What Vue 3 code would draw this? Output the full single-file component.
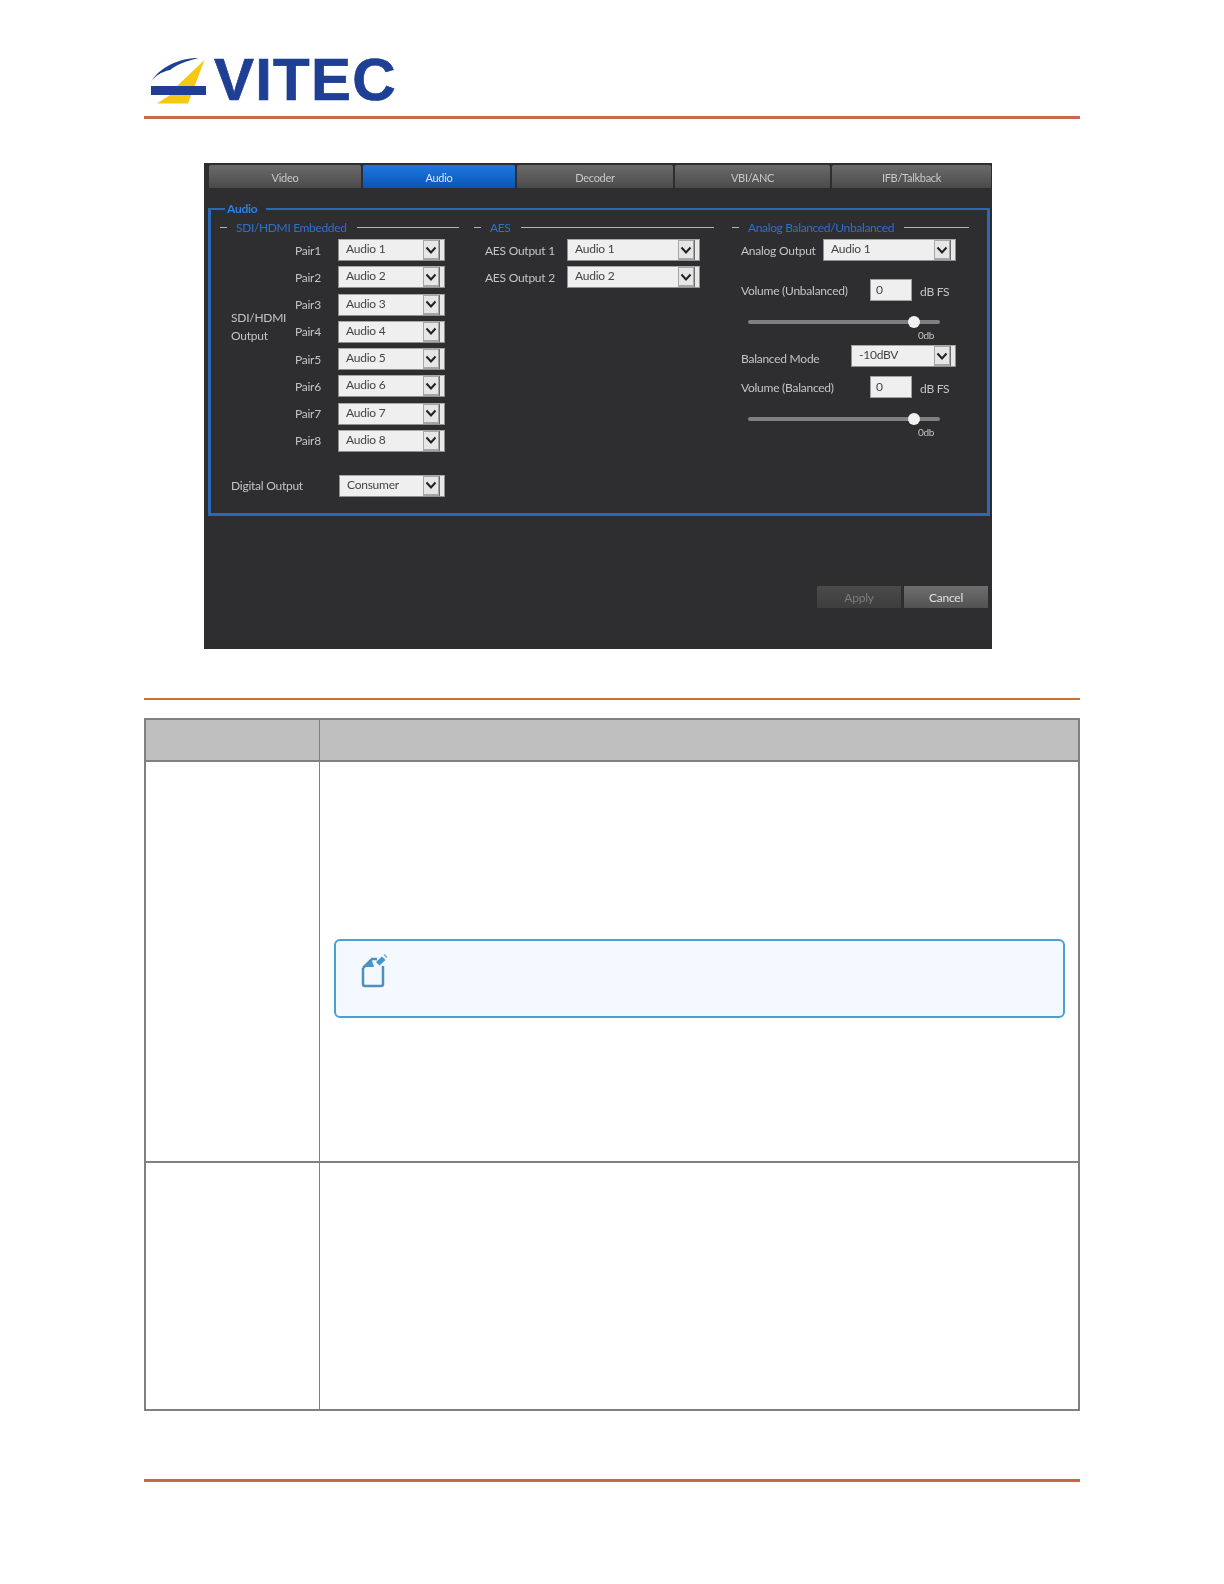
<script setup>
const tabs = ['Video', 'Audio', 'Decoder', 'VBI/ANC', 'IFB/Talkback']
const pairs = [1, 2, 3, 4, 5, 6, 7, 8]
</script>

<template>
  <div class="page">
    <header class="header">
      <div class="logo">
        <svg class="mark" width="58" height="48" viewBox="150 57 58 48">
          <path d="M204.500 60 L177 86 L206 86 L206 95 L170 95 L157 103.500 L188 103.500 Z" fill="#f6c812" />
          <path d="M151 82 C159 68 178 58 198.500 58 C186 61 176 65 170 70 C161 72 155 76 151 82 Z" fill="#1f3f94" />
          <rect x="151" y="86" width="55" height="9" fill="#1f3f94" />
        </svg>
        <span class="wordmark">VITEC</span>
      </div>
    </header>

    <section class="panel">
      <nav class="tabs">
        <div v-for="t in tabs" :key="t" class="tab" :class="{ active: t === 'Audio' }">{{ t }}</div>
      </nav>

      <fieldset class="audio">
        <legend>Audio</legend>
        <div class="cols">
          <div class="col col-a">
            <div class="sec"><i class="dash"></i><span>SDI/HDMI Embedded</span><i class="line"></i></div>
            <div class="embedded">
              <div class="side">SDI/HDMI<br />Output</div>
              <div class="pairs">
                <div v-for="p in pairs" :key="p" class="pair">
                  <span class="lbl">Pair{{ p }}</span>
                  <div class="sel">
                    <span class="val">Audio {{ p }}</span>
                    <span class="btn"><svg width="14" height="14" viewBox="0 0 14 14"><path d="M2.500 4.500 L7 9.500 L11.500 4.500" fill="none" stroke="#222" stroke-width="2" /></svg></span>
                    <span class="strip"></span>
                  </div>
                </div>
              </div>
            </div>
            <div class="digital">
              <span class="lbl">Digital Output</span>
              <div class="sel">
                <span class="val">Consumer</span>
                <span class="btn"><svg width="14" height="14" viewBox="0 0 14 14"><path d="M2.500 4.500 L7 9.500 L11.500 4.500" fill="none" stroke="#222" stroke-width="2" /></svg></span>
                <span class="strip"></span>
              </div>
            </div>
          </div>

          <div class="col col-b">
            <div class="sec"><i class="dash"></i><span>AES</span><i class="line"></i></div>
            <div class="aes">
              <div v-for="n in 2" :key="n" class="aes-row">
                <span class="lbl">AES Output {{ n }}</span>
                <div class="sel">
                  <span class="val">Audio {{ n }}</span>
                  <span class="btn"><svg width="14" height="14" viewBox="0 0 14 14"><path d="M2.500 4.500 L7 9.500 L11.500 4.500" fill="none" stroke="#222" stroke-width="2" /></svg></span>
                  <span class="strip"></span>
                </div>
              </div>
            </div>
          </div>

          <div class="col col-c">
            <div class="sec"><i class="dash"></i><span>Analog Balanced/Unbalanced</span><i class="line"></i></div>
            <div class="analog">
              <div class="row">
                <span class="lbl">Analog Output</span>
                <div class="sel w-output">
                  <span class="val">Audio 1</span>
                  <span class="btn"><svg width="14" height="14" viewBox="0 0 14 14"><path d="M2.500 4.500 L7 9.500 L11.500 4.500" fill="none" stroke="#222" stroke-width="2" /></svg></span>
                  <span class="strip"></span>
                </div>
              </div>
              <div class="row vol first">
                <span class="lbl">Volume (Unbalanced)</span>
                <span class="input">0</span>
                <span class="unit">dB FS</span>
              </div>
              <div class="slider"><div class="track"><b class="thumb"></b></div><div class="tick">0db</div></div>
              <div class="row mode">
                <span class="lbl">Balanced Mode</span>
                <div class="sel w-mode">
                  <span class="val">-10dBV</span>
                  <span class="btn"><svg width="14" height="14" viewBox="0 0 14 14"><path d="M2.500 4.500 L7 9.500 L11.500 4.500" fill="none" stroke="#222" stroke-width="2" /></svg></span>
                  <span class="strip"></span>
                </div>
              </div>
              <div class="row vol second">
                <span class="lbl">Volume (Balanced)</span>
                <span class="input">0</span>
                <span class="unit">dB FS</span>
              </div>
              <div class="slider"><div class="track"><b class="thumb"></b></div><div class="tick">0db</div></div>
            </div>
          </div>
        </div>
      </fieldset>

      <div class="actions">
        <div class="action apply">Apply</div>
        <div class="action cancel">Cancel</div>
      </div>
    </section>

    <div class="rule"></div>

    <div class="table">
      <div class="cell head first-col"></div>
      <div class="cell head"></div>
      <div class="cell row-one first-col"></div>
      <div class="cell row-one">
        <div class="note">
          <svg class="note-icon" width="28" height="37" viewBox="0 0 28 37">
            <path d="M3 15 L12 6 L17 6 M23 13 L23 31 Q23 33 21 33 L5 33 Q3 33 3 31 L3 15" fill="none" stroke="#4f8fbe" stroke-width="2.500" />
            <path d="M5 14 L12 7.500 L14 14 Z" fill="#3f97d6" />
            <path d="M16 9 L22 3.500 L25.500 7 L19.500 12.500 Z" fill="#3f97d6" />
            <path d="M24 1.500 L27 4.500" stroke="#7fa9c6" stroke-width="1.500" />
          </svg>
        </div>
      </div>
      <div class="cell row-two first-col"></div>
      <div class="cell row-two"></div>
    </div>

    <div class="footer-rule"></div>
  </div>
</template>

<style>
html, body { margin: 0; background: #fff; }
</style>

<style scoped>
.page {
  width: 936px;
  margin-left: 144px;
  height: 1584px;
  display: flex;
  flex-direction: column;
  font-family: Lato, "Open Sans", "Liberation Sans", sans-serif;
}
.header {
  height: 116px;
  border-bottom: 3px solid #c76b4a;
  flex: none;
  box-sizing: content-box;
}
.logo {
  display: flex;
  align-items: flex-start;
  padding: 57px 0 0 6px;
  filter: blur(0.4px);
}
.mark { display: block; flex: none; }
.wordmark {
  margin-left: 6px;
  margin-top: -9px;
  font: bold 60px/64px "Liberation Sans", sans-serif;
  letter-spacing: 1.200px;
  -webkit-text-stroke: 0.700px #1f3f94;
  color: #1f3f94;
}

.panel {
  flex: none;
  margin: 44px 0 0 60px;
  width: 788px;
  height: 486px;
  background: #2e2e30;
  box-sizing: border-box;
  padding-top: 2px;
  display: flex;
  flex-direction: column;
  filter: blur(0.45px);
  font-size: 12px;
  letter-spacing: -0.250px;
  color: #c4c4c4;
}
.tabs {
  display: grid;
  grid-template-columns: 154px 154px 158px 157px 161px;
  padding-left: 5px;
  height: 23px;
  flex: none;
}
.tab {
  height: 23px;
  margin-right: 2px;
  background: linear-gradient(#6a6a6a, #4b4b4b);
  color: #c9c9c9;
  font-size: 11px;
  line-height: 26px;
  text-align: center;
  letter-spacing: -0.300px;
  border-radius: 2px 2px 0 0;
}
.tab.active {
  background: linear-gradient(#1d78e0, #0b55b5);
  color: #d8e6f6;
}

.audio {
  flex: none;
  width: 782px;
  height: 315px;
  box-sizing: border-box;
  margin: 13px 0 0 4px;
  padding: 3px 0 0 9px;
  border: 3px solid #2b69b6;
  border-top-width: 2px;
  min-width: 0;
}
.audio legend {
  margin-left: 5px;
  padding: 0 9px 0 2px;
  font-size: 12px;
  font-weight: 700;
  line-height: 16px;
  color: #2f7fe6;
}
.cols {
  display: grid;
  grid-template-columns: 254px 258px 237px;
}
.col-a { padding-right: 15px; }
.col-b { padding-right: 18px; }
.sec {
  display: flex;
  align-items: center;
  height: 14px;
  font-size: 12px;
  letter-spacing: -0.350px;
  color: #2f6fd0;
  white-space: nowrap;
}
.dash { flex: none; width: 7px; height: 1px; background: #b5b5b5; margin-right: 9px; }
.line { flex: 1; height: 1px; background: #b5b5b5; margin-left: 10px; }

.lbl { color: #c4c4c4; white-space: nowrap; }

.sel {
  display: flex;
  align-items: stretch;
  height: 22px;
  box-sizing: border-box;
  background: #efefef;
  border: 1px solid #8f8f8f;
  border-top-color: #a8a8a8;
  color: #444;
}
.val { flex: 1; padding-left: 7px; line-height: 18px; font-size: 12px; }
.btn {
  flex: none;
  width: 16px;
  display: flex;
  align-items: center;
  justify-content: center;
  background: #e6e6e6;
  border: 1px solid #a6a6a6;
  border-bottom-width: 2px;
  box-sizing: border-box;
}
.strip { flex: none; width: 5px; background: #e8e8e8; border-left: 1px solid #6e6e6e; box-sizing: border-box; }

.embedded { display: flex; margin-top: 5px; }
.side {
  width: 75px;
  padding-left: 11px;
  box-sizing: border-box;
  margin-top: 70px;
  line-height: 18px;
  flex: none;
  white-space: nowrap;
}
.pairs { display: flex; flex-direction: column; gap: 5.250px; }
.pair { display: grid; grid-template-columns: 43px 107px; align-items: center; }
.digital {
  display: grid;
  grid-template-columns: 108px 106px;
  align-items: center;
  margin-top: 23px;
  padding-left: 11px;
}

.aes { display: flex; flex-direction: column; gap: 5px; margin-top: 5px; padding-left: 11px; }
.aes-row { display: grid; grid-template-columns: 82px 133px; align-items: center; }

.analog { margin-top: 5px; padding-left: 9px; }
.row { display: flex; align-items: center; height: 22px; }
.row .lbl { flex: none; }
.w-output { width: 133px; margin-left: auto; margin-right: 13px; }
.w-mode { width: 105px; margin-left: auto; margin-right: 13px; }
.vol .lbl { width: 129px; }
.first { margin-top: 18px; }
.second { margin-top: 9px; }
.input {
  flex: none;
  width: 42px;
  height: 22px;
  box-sizing: border-box;
  background: #efefef;
  border: 1px solid #a0a0a0;
  color: #444;
  padding-left: 5px;
  line-height: 19px;
}
.unit { margin-left: 8px; padding-top: 3px; }
.slider { margin: 19px 0 0 7px; width: 192px; }
.track { position: relative; height: 4px; background: #808080; border-radius: 2px; }
.thumb {
  position: absolute;
  left: 160px;
  top: -4px;
  width: 12px;
  height: 12px;
  border-radius: 50%;
  background: #f2f2f2;
}
.tick { text-align: right; padding: 4px 6px 0 0; font-size: 10px; line-height: 14px; letter-spacing: -0.300px; }
.mode { margin-top: 3px; }
.mode .lbl { padding-top: 5px; }

.actions {
  margin-top: auto;
  margin-bottom: 41px;
  padding-right: 4px;
  display: flex;
  justify-content: flex-end;
  gap: 3px;
}
.action { width: 84px; height: 22px; line-height: 23px; text-align: center; font-size: 12px; }
.apply { background: linear-gradient(#4a4a4a, #3e3e3e); color: #7c7c7c; }
.cancel { background: linear-gradient(#6e6e6e, #525252); color: #e2e2e2; }

.rule {
  flex: none;
  margin-top: 49px;
  height: 2px;
  background: #c87533;
}
.table {
  flex: none;
  margin-top: 18px;
  display: grid;
  grid-template-columns: 173px 1fr;
  grid-template-rows: 40px 399px 246px;
  background: #808080;
  box-sizing: border-box;
  height: 693px;
  padding: 2px;
  row-gap: 2px;
  column-gap: 1px;
}
.cell { background: #fff; }
.head { background: #bfbfbf; }
.note {
  margin: 177px 13px 0 14px;
  height: 79px;
  box-sizing: border-box;
  background: #f3f9fe;
  border: 2px solid #4a9fd4;
  border-radius: 6px;
  padding: 12px 0 0 24px;
}
.note-icon { display: block; }
.footer-rule {
  flex: none;
  margin-top: 68px;
  height: 3px;
  background: #c8664b;
}
</style>
